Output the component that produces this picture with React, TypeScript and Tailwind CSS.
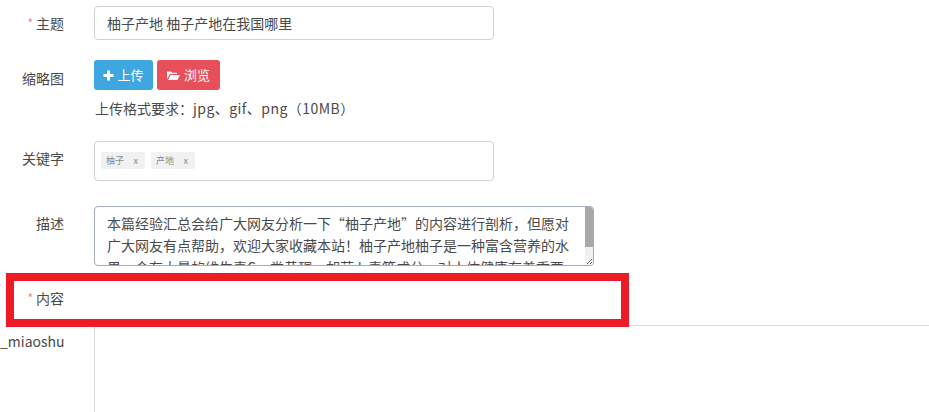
function Tag({ text }: { text: string }) {
  return (
    <span className="h-[17px] w-[44px] rounded-[2px] bg-[#f0f1f3] text-[9px] text-[#8a8a8a] flex items-center justify-between pl-[5px] pr-[7px]">
      <span>{text}</span>
      <span>x</span>
    </span>
  );
}

function Star() {
  return <span className="text-[#e98a90] text-[12px] mr-[3px] relative top-[-1px]">*</span>;
}

export default function App() {
  return (
    <div className="w-[929px] h-[412px] overflow-hidden bg-white text-[14px] text-[#4a4a4a] font-['Noto_Sans_CJK_SC','Open_Sans',sans-serif]">
      <div className="flex h-[48px] items-start pt-[6px]">
        <label className="w-[64px] pt-[7px] text-right leading-[20px]"><Star />主题</label>
        <input readOnly value="柚子产地 柚子产地在我国哪里" className="ml-[30px] w-[400px] h-[34px] border border-[#cfd2d6] rounded-[4px] px-[12px] outline-none text-[#4a4a4a]" />
      </div>
      <div className="flex h-[93px] items-start pt-[12px]">
        <label className="w-[64px] pt-[8px] text-right leading-[20px]">缩略图</label>
        <div className="ml-[30px]">
          <div className="flex gap-[4px]">
            <button className="h-[30px] w-[59px] rounded-[3px] bg-[#3ea7e1] text-white text-[13px] flex items-center justify-center gap-[3px]">
              <svg width="11" height="11" viewBox="0 0 11 11"><path d="M5.5 0.5v10M0.5 5.5h10" stroke="white" strokeWidth="3" /></svg>上传
            </button>
            <button className="h-[30px] w-[63px] rounded-[3px] bg-[#e7505a] text-white text-[13px] flex items-center justify-center gap-[4px]">
              <svg width="13" height="11" viewBox="0 0 13 11"><path d="M0 9V1.5h4l1 1.2h5V4H3L0 9zM1 10l2.6-5H13l-2.6 5H1z" fill="white" /></svg>浏览
            </button>
          </div>
          <p className="mt-[8px] ml-[1px] leading-[20px] whitespace-nowrap">上传格式要求：<span className="tracking-[0.45px]">jpg、gif、png（10MB）</span></p>
        </div>
      </div>
      <div className="flex h-[65px] items-start">
        <label className="w-[64px] pt-[7px] text-right leading-[20px]">关键字</label>
        <div className="ml-[30px] w-[400px] h-[40px] border border-[#cfd2d6] rounded-[4px] flex items-center gap-[6px] px-[6px] pb-[1px]">
          <Tag text="柚子" />
          <Tag text="产地" />
        </div>
      </div>
      <div className="flex h-[60px] items-start">
        <label className="w-[64px] pt-[7px] text-right leading-[20px]">描述</label>
        <div className="relative ml-[30px] w-[500px] h-[60px] border border-[#a3adba] rounded-[4px] overflow-hidden pl-[12px] pr-[20px] pt-[5px] leading-[22px]">
          <p>本篇经验汇总会给广大网友分析一下“柚子产地”的内容进行剖析，但愿对</p>
          <p>广大网友有点帮助，欢迎大家收藏本站！柚子产地柚子是一种富含营养的水</p>
          <p>果，含有大量的维生素C、类黄酮、胡萝卜素等成分，对人体健康有着重要</p>
          <div className="absolute right-0 top-0 w-[8px] h-full bg-[#f1f1f1]">
            <div className="h-[40px] bg-[#a8a8a8]" />
            <svg className="absolute right-0 bottom-0" width="8" height="8" viewBox="0 0 8 8"><path d="M7 2L2 7M7 5L5 7" stroke="#777" strokeWidth="1" /></svg>
          </div>
        </div>
      </div>
      <div className="relative h-[59px]">
        <div className="absolute left-[6px] top-[7px] w-[623px] h-[54px] border-[8px] border-[#ed1c24] flex items-center">
          <span className="w-[50px] text-right relative top-[-2px]"><Star />内容</span>
        </div>
      </div>
      <div className="flex">
        <label className="w-[64px] pt-[6px] text-right leading-[20px] whitespace-nowrap overflow-hidden">_miaoshu</label>
        <div className="ml-[30px] flex-1 h-[90px] border-l border-t border-[#d8d8d8]" />
      </div>
    </div>
  );
}
